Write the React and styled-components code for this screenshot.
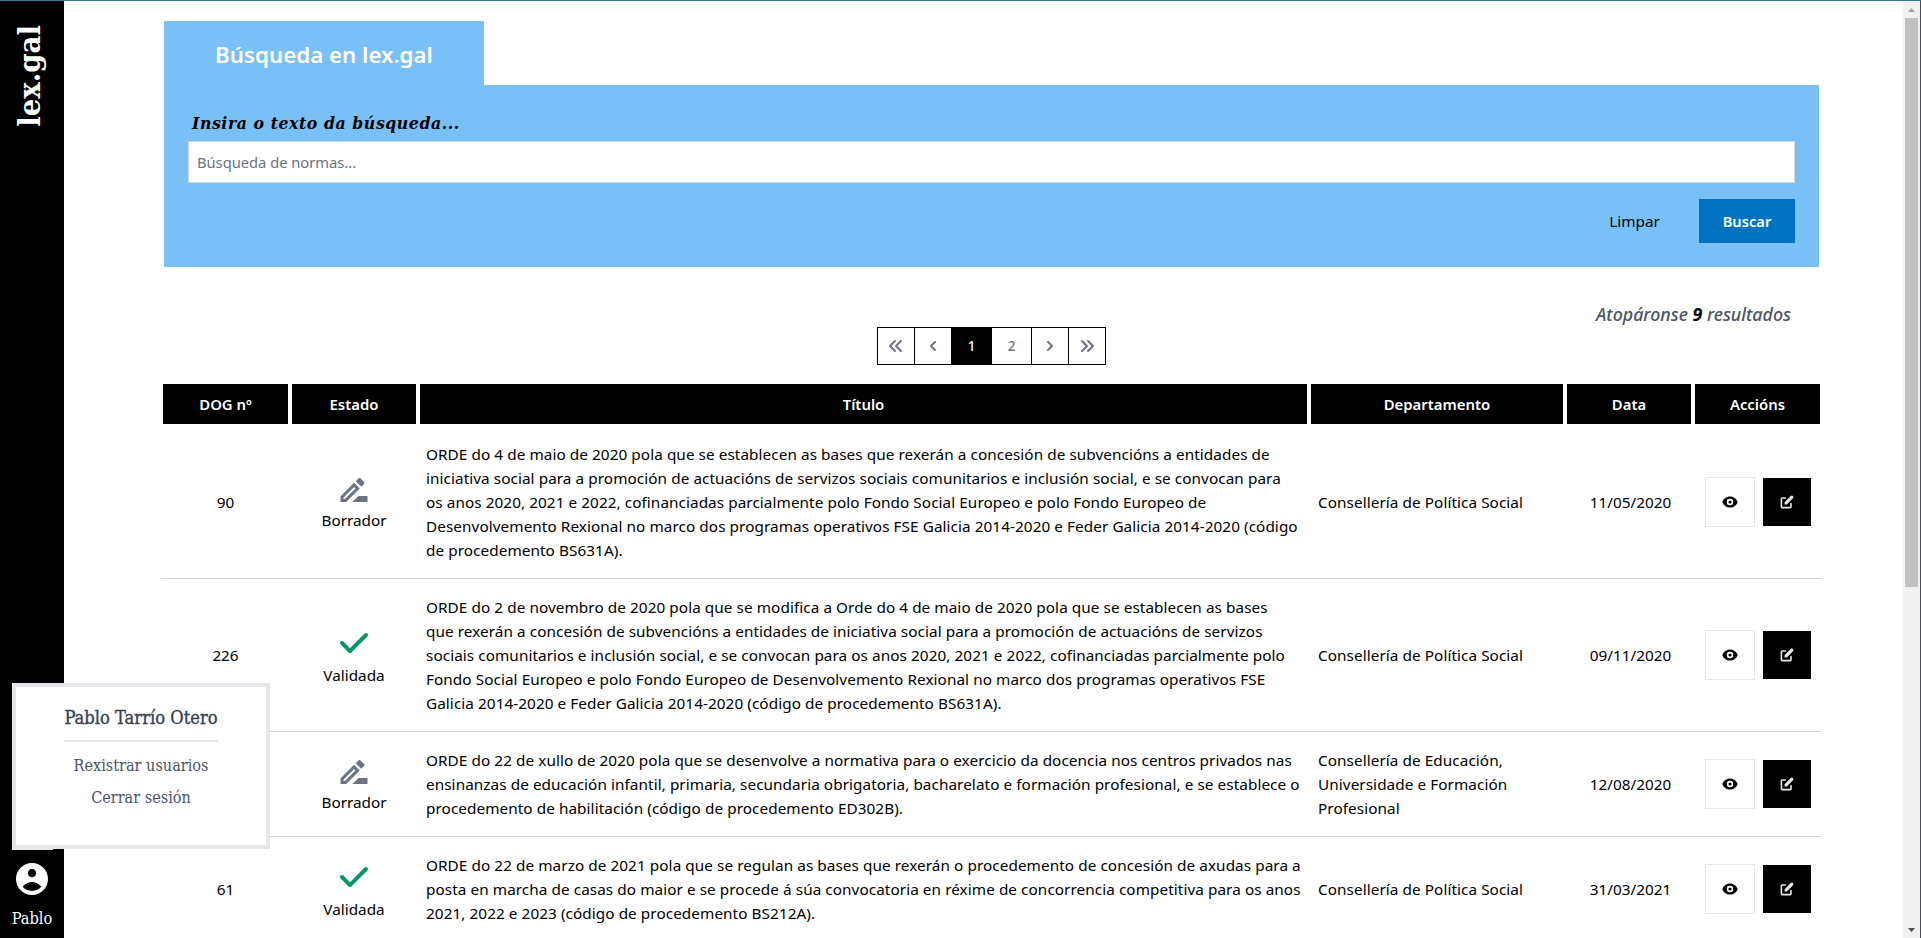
import React from "react";
import styled, { createGlobalStyle, css } from "styled-components";

const sans = `"Noto Sans", "Open Sans", sans-serif`;
const slab = `"DejaVu Serif Condensed", "DejaVu Serif", serif`;

const GlobalStyle = createGlobalStyle`
  *, *::before, *::after { box-sizing: border-box; }
  html, body { margin: 0; padding: 0; height: 938px; overflow: hidden; background: #fff; }
  body { font-family: ${sans}; font-size: 15.3px; line-height: 24px; color: #000; }
  button, input { font: inherit; border: 0; border-radius: 0; margin: 0; }
  svg { display: block; flex: none; }
  p, h1, h2 { margin: 0; }
`;

const Frame = styled.div`
  position: relative;
  display: flex;
  width: 1921px;
  height: 938px;
  overflow: hidden;
  border-top: 1px solid #34788a;
  border-right: 1px solid #3f4d66;
`;

const Sidebar = styled.aside`
  flex: none;
  width: 64px;
  height: 100%;
  padding: 24px 0 7px;
  background: #000;
  color: #fff;
  display: flex;
  flex-direction: column;
  justify-content: space-between;
  align-items: center;
  font-family: ${slab};
`;

const Logo = styled.h1`
  writing-mode: vertical-rl;
  transform: rotate(180deg);
  font-size: 30.7px;
  line-height: 40px;
  font-weight: 700;
  margin-right: 6px;
`;

const UserButton = styled.button`
  display: flex;
  flex-direction: column;
  align-items: center;
  gap: 12px;
  padding: 0;
  background: none;
  color: #fff;
  font-family: ${slab};
  font-size: 16.2px;
`;

const UserMenu = styled.div`
  position: absolute;
  z-index: 2;
  left: 12px;
  top: 682px;
  width: 258px;
  height: 166px;
  padding: 19px 0 0;
  border: 4px solid #e5e7eb;
  background: #fff;
  display: flex;
  flex-direction: column;
  align-items: center;
  font-family: ${slab};
  color: #374151;

  &::after {
    content: "";
    position: absolute;
    left: -4px;
    bottom: -5px;
    width: 41px;
    height: 1px;
    background: #e5e7eb;
  }
`;

const UserName = styled.h2`
  width: 154px;
  padding-bottom: 10px;
  margin-bottom: 12px;
  border-bottom: 2px solid #e5e7eb;
  font-size: 18.2px;
  line-height: 24px;
  font-weight: 500;
  -webkit-text-stroke: 0.35px currentColor;
  text-align: center;
  white-space: nowrap;
`;

const MenuLink = styled.a`
  display: block;
  margin-bottom: 8px;
  font-size: 16.1px;
  color: #4b5563;
  white-space: nowrap;
`;

const Main = styled.main`
  flex: 1;
  min-width: 0;
  height: 100%;
  padding: 20px 81px 0 97px;
`;

const SearchArea = styled.section`
  margin: 0 3px;
`;

const Tab = styled.div`
  width: 320px;
  height: 64px;
  display: flex;
  align-items: center;
  justify-content: center;
  padding-top: 3px;
  background: #79c0f7;
  color: #fff;
  font-size: 22.3px;
  font-weight: 600;
`;

const SearchPanel = styled.div`
  height: 182px;
  padding: 24px;
  background: #79c0f7;
`;

const Label = styled.label`
  display: block;
  height: 32px;
  padding-left: 4px;
  font-family: ${slab};
  font-size: 17.5px;
  letter-spacing: 0.56px;
  line-height: 28px;
  font-style: italic;
  font-weight: 700;
`;

const SearchInput = styled.input`
  display: block;
  width: 100%;
  height: 42px;
  padding: 0 8px;
  border: 1px solid #d1d5db;
  background: #fff;
  outline: none;
  font-size: 14.7px;
  &::placeholder { color: #6b7280; opacity: 1; }
`;

const SearchActions = styled.div`
  display: flex;
  justify-content: flex-end;
  gap: 16px;
  margin-top: 16px;
`;

const TextButton = styled.button`
  height: 44px;
  width: 97px;
  padding: 0;
  color: ${(p) => (p.$primary ? "#fff" : "#000")};
  background: ${(p) => (p.$primary ? "#0072c0" : "transparent")};
  ${(p) => p.$primary && css`width: 96px; font-weight: 600; font-size: 14.7px;`}
`;

const ResultCount = styled.p`
  height: 28px;
  margin: 33px 31px 0 0;
  text-align: right;
  font-size: 17.8px;
  line-height: 28px;
  font-style: italic;
  font-weight: 500;
  color: #4b5563;
  strong { color: #000; font-weight: 700; }
`;

const Pagination = styled.nav`
  display: flex;
  justify-content: center;
  height: 38px;
  margin: -1px 0 17px;
`;

const PageButton = styled.button`
  width: ${(p) => p.$width || 38}px;
  height: 38px;
  padding: 0;
  display: flex;
  align-items: center;
  justify-content: center;
  border: 1px solid #000;
  & + & { margin-left: -1px; }
  font-size: 13.5px;
  font-weight: 500;
  background: ${(p) => (p.$active ? "#000" : "#fff")};
  color: ${(p) => (p.$active ? "#fff" : "#6b7280")};
`;

const Table = styled.div`
  width: 1661px;
`;

const columns = css`
  display: grid;
  grid-template-columns: 129px 128px 891px 256px 128px 129px;
`;

const HeadRow = styled.div`
  ${columns}
  height: 44px;
`;

const HeadCell = styled.div`
  margin: 2px;
  display: flex;
  align-items: center;
  justify-content: center;
  background: #000;
  color: #fff;
  font-size: 14.9px;
  font-weight: 600;
`;

const Row = styled.div`
  ${columns}
  align-items: center;
  padding: 16px 0;
  border-bottom: 1px solid #d1d5db;
`;

const Cell = styled.div`
  padding: 0 8px 0 ${(p) => p.$inset || 8}px;
  font-weight: 450;
  letter-spacing: 0.07px;
  white-space: nowrap;
  ${(p) => p.$center && css`text-align: center; letter-spacing: 0;`}
`;

const Line = styled.span`
  display: block;
`;

const Status = styled.div`
  display: flex;
  flex-direction: column;
  align-items: center;
  font-weight: 450;
  color: #000;
`;

const RowActions = styled.div`
  display: flex;
  align-items: center;
  justify-content: center;
  gap: 8px;
`;

const IconButton = styled.button`
  display: flex;
  align-items: center;
  justify-content: center;
  padding: 0;
  width: ${(p) => (p.$dark ? 48 : 50)}px;
  height: ${(p) => (p.$dark ? 48 : 50)}px;
  background: ${(p) => (p.$dark ? "#000" : "#fff")};
  color: ${(p) => (p.$dark ? "#e5e7eb" : "#000")};
  border: ${(p) => (p.$dark ? "0" : "1px solid #e5e7eb")};
`;

const Scrollbar = styled.div`
  flex: none;
  width: 17px;
  height: 100%;
  background: #f1f1f1;
  display: flex;
  flex-direction: column;
  align-items: center;
  justify-content: space-between;
`;

const ScrollTrack = styled.div`
  flex: 1;
  width: 13px;
`;

const Thumb = styled.div`
  height: 569px;
  background: #c1c1c1;
`;

const ScrollArrow = styled.div`
  height: 17px;
  display: flex;
  align-items: center;
`;

const Icon = ({ d, size = 20, box = "0 0 20 20", color = "currentColor" }) => (
  <svg width={size} height={size} viewBox={box} fill={color}>
    <path fillRule="evenodd" clipRule="evenodd" d={d} />
  </svg>
);

const paths = {
  first:
    "M15.707 15.707a1 1 0 01-1.414 0l-5-5a1 1 0 010-1.414l5-5a1 1 0 111.414 1.414L11.414 10l4.293 4.293a1 1 0 010 1.414zm-6 0a1 1 0 01-1.414 0l-5-5a1 1 0 010-1.414l5-5a1 1 0 011.414 1.414L5.414 10l4.293 4.293a1 1 0 010 1.414z",
  prev: "M12.707 5.293a1 1 0 010 1.414L9.414 10l3.293 3.293a1 1 0 01-1.414 1.414l-4-4a1 1 0 010-1.414l4-4a1 1 0 011.414 0z",
  next: "M7.293 14.707a1 1 0 010-1.414L10.586 10 7.293 6.707a1 1 0 011.414-1.414l4 4a1 1 0 010 1.414l-4 4a1 1 0 01-1.414 0z",
  last: "M4.293 15.707a1 1 0 001.414 0l5-5a1 1 0 000-1.414l-5-5a1 1 0 00-1.414 1.414L8.586 10l-4.293 4.293a1 1 0 000 1.414zm6 0a1 1 0 001.414 0l5-5a1 1 0 000-1.414l-5-5a1 1 0 00-1.414 1.414L14.586 10l-4.293 4.293a1 1 0 000 1.414z",
  check:
    "M16.707 5.293a1 1 0 010 1.414l-8 8a1 1 0 01-1.414 0l-4-4a1 1 0 011.414-1.414L8 12.586l7.293-7.293a1 1 0 011.414 0z",
  draft:
    "M15 16l-4 4h10v-4zM12.06 7.19L3 16.25V20h3.75l9.06-9.06-3.75-3.75zM5.92 18H5v-.92l7.06-7.06.92.92L5.92 18zM18.71 8.04a.996.996 0 000-1.41l-2.34-2.34c-.2-.2-.45-.29-.71-.29s-.51.1-.7.29l-1.83 1.83 3.75 3.75 1.83-1.83z",
  eye: "M12 10a2 2 0 11-4 0 2 2 0 014 0zM.458 10C1.732 5.943 5.522 3 10 3s8.268 2.943 9.542 7c-1.274 4.057-5.064 7-9.542 7S1.732 14.057.458 10zM14 10a4 4 0 11-8 0 4 4 0 018 0z",
  edit: "M17.414 2.586a2 2 0 00-2.828 0L7 10.172V13h2.828l7.586-7.586a2 2 0 000-2.828zM2 6a2 2 0 012-2h4a1 1 0 010 2H4v10h10v-4a1 1 0 112 0v4a2 2 0 01-2 2H4a2 2 0 01-2-2V6z",
  user: "M12 2C6.48 2 2 6.48 2 12s4.48 10 10 10 10-4.48 10-10S17.52 2 12 2zm0 3.7a2.6 2.6 0 110 5.2 2.6 2.6 0 010-5.2zm0 13.8c-2.4 0-4.5-1-5.8-2.6.9-1.700 3.600-3.100 5.800-3.100s4.900 1.400 5.800 3.100c-1.300 1.600-3.400 2.600-5.800 2.600z",
};

const rows = [
  {
    dog: "90",
    valid: false,
    title: [
      "ORDE do 4 de maio de 2020 pola que se establecen as bases que rexerán a concesión de subvencións a entidades de",
      "iniciativa social para a promoción de actuacións de servizos sociais comunitarios e inclusión social, e se convocan para",
      "os anos 2020, 2021 e 2022, cofinanciadas parcialmente polo Fondo Social Europeo e polo Fondo Europeo de",
      "Desenvolvemento Rexional no marco dos programas operativos FSE Galicia 2014-2020 e Feder Galicia 2014-2020 (código",
      "de procedemento BS631A).",
    ],
    dept: ["Consellería de Política Social"],
    date: "11/05/2020",
  },
  {
    dog: "226",
    valid: true,
    title: [
      "ORDE do 2 de novembro de 2020 pola que se modifica a Orde do 4 de maio de 2020 pola que se establecen as bases",
      "que rexerán a concesión de subvencións a entidades de iniciativa social para a promoción de actuacións de servizos",
      "sociais comunitarios e inclusión social, e se convocan para os anos 2020, 2021 e 2022, cofinanciadas parcialmente polo",
      "Fondo Social Europeo e polo Fondo Europeo de Desenvolvemento Rexional no marco dos programas operativos FSE",
      "Galicia 2014-2020 e Feder Galicia 2014-2020 (código de procedemento BS631A).",
    ],
    dept: ["Consellería de Política Social"],
    date: "09/11/2020",
  },
  {
    dog: "",
    valid: false,
    title: [
      "ORDE do 22 de xullo de 2020 pola que se desenvolve a normativa para o exercicio da docencia nos centros privados nas",
      "ensinanzas de educación infantil, primaria, secundaria obrigatoria, bacharelato e formación profesional, e se establece o",
      "procedemento de habilitación (código de procedemento ED302B).",
    ],
    dept: ["Consellería de Educación,", "Universidade e Formación", "Profesional"],
    date: "12/08/2020",
  },
  {
    dog: "61",
    valid: true,
    title: [
      "ORDE do 22 de marzo de 2021 pola que se regulan as bases que rexerán o procedemento de concesión de axudas para a",
      "posta en marcha de casas do maior e se procede á súa convocatoria en réxime de concorrencia competitiva para os anos",
      "2021, 2022 e 2023 (código de procedemento BS212A).",
    ],
    dept: ["Consellería de Política Social"],
    date: "31/03/2021",
  },
];

const heads = ["DOG nº", "Estado", "Título", "Departamento", "Data", "Accións"];

function NormRow({ row }) {
  return (
    <Row>
      <Cell $center>{row.dog}</Cell>
      <Status>
        {row.valid ? (
          <Icon d={paths.check} size={40} color="#059669" />
        ) : (
          <Icon d={paths.draft} size={36} box="0 0 24 24" color="#6b7280" />
        )}
        <span>{row.valid ? "Validada" : "Borrador"}</span>
      </Status>
      <Cell>{row.title.map((t) => <Line key={t}>{t}</Line>)}</Cell>
      <Cell $inset={9}>{row.dept.map((t) => <Line key={t}>{t}</Line>)}</Cell>
      <Cell $center $inset={11}>{row.date}</Cell>
      <RowActions>
        <IconButton aria-label="Ver"><Icon d={paths.eye} size={16} /></IconButton>
        <IconButton $dark aria-label="Editar"><Icon d={paths.edit} size={16} /></IconButton>
      </RowActions>
    </Row>
  );
}

export default function App() {
  return (
    <>
      <GlobalStyle />
      <Frame>
        <Sidebar>
          <Logo>lex.gal</Logo>
          <UserButton>
            <Icon d={paths.user} size={32} box="2 2 20 20" />
            <span>Pablo</span>
          </UserButton>
        </Sidebar>
        <UserMenu>
          <UserName>Pablo Tarrío Otero</UserName>
          <MenuLink>Rexistrar usuarios</MenuLink>
          <MenuLink>Cerrar sesión</MenuLink>
        </UserMenu>
        <Main>
          <SearchArea>
            <Tab>Búsqueda en lex.gal</Tab>
            <SearchPanel>
              <Label htmlFor="q">Insira o texto da búsqueda...</Label>
              <SearchInput id="q" placeholder="Búsqueda de normas..." />
              <SearchActions>
                <TextButton>Limpar</TextButton>
                <TextButton $primary>Buscar</TextButton>
              </SearchActions>
            </SearchPanel>
          </SearchArea>
          <ResultCount>Atopáronse <strong>9</strong> resultados</ResultCount>
          <Pagination>
            <PageButton aria-label="Primeira"><Icon d={paths.first} /></PageButton>
            <PageButton aria-label="Anterior"><Icon d={paths.prev} /></PageButton>
            <PageButton $active $width={41}>1</PageButton>
            <PageButton $width={41}>2</PageButton>
            <PageButton aria-label="Seguinte"><Icon d={paths.next} /></PageButton>
            <PageButton aria-label="Última"><Icon d={paths.last} /></PageButton>
          </Pagination>
          <Table>
            <HeadRow>{heads.map((h) => <HeadCell key={h}>{h}</HeadCell>)}</HeadRow>
            {rows.map((r) => <NormRow key={r.title[0]} row={r} />)}
          </Table>
        </Main>
        <Scrollbar>
          <ScrollArrow>
            <svg width="7" height="4" viewBox="0 0 7 4" fill="#a3a3a3"><path d="M0 4L3.500 0 7 4z" /></svg>
          </ScrollArrow>
          <ScrollTrack><Thumb /></ScrollTrack>
          <ScrollArrow>
            <svg width="7" height="4" viewBox="0 0 7 4" fill="#505050"><path d="M0 0L3.500 4 7 0z" /></svg>
          </ScrollArrow>
        </Scrollbar>
      </Frame>
    </>
  );
}
